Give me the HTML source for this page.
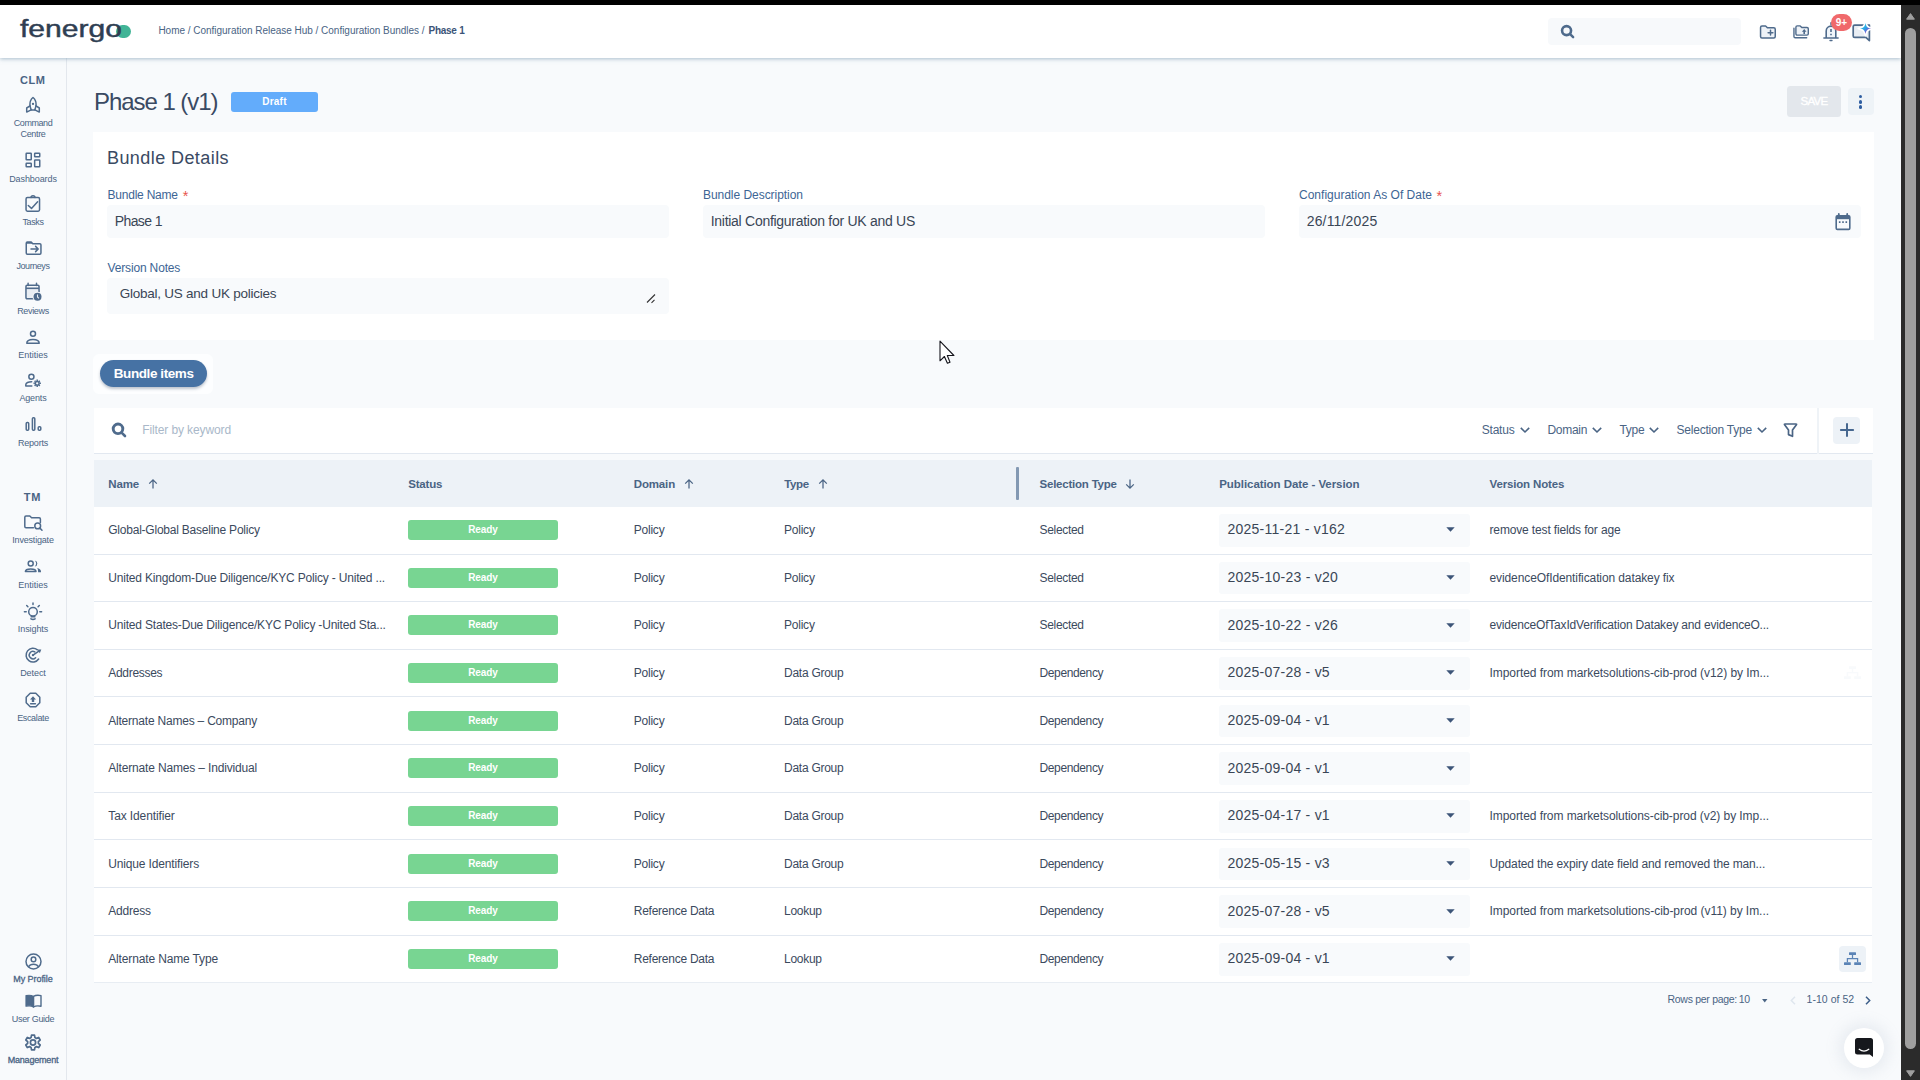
<!DOCTYPE html>
<html lang="en">
<head>
<meta charset="utf-8">
<title>Phase 1 - Configuration Bundles</title>
<style>
*{box-sizing:border-box;margin:0;padding:0}
html,body{width:1920px;height:1080px;overflow:hidden}
body{font-family:"Liberation Sans",sans-serif;background:#f8fafc;color:#33475b;position:relative}
.abs{position:absolute}
#topbar{position:absolute;left:0;top:0;width:1920px;height:5px;background:#000;z-index:30}
#header{position:absolute;left:0;top:0;width:1901px;height:58px;background:#fff;box-shadow:0 1px 4px rgba(105,140,165,.55);z-index:20}
#sidebar{position:absolute;left:0;top:0;width:67px;height:1080px;background:#f8fafc;border-right:1px solid #e3e7ed;z-index:10}
#scroll{position:absolute;left:1901px;top:5px;width:19px;height:1075px;background:#2b2b2b;z-index:25}
#scroll .thumb{position:absolute;left:4px;top:22.800px;width:11px;height:1021.200px;border-radius:5.500px;background:#9f9f9f}
.t{position:absolute;white-space:pre}
svg{overflow:visible}
</style>
</head>
<body>
<div id="main">
<span class="t" style="left:94.00px;top:89.68px;font-size:24px;line-height:24px;color:#3a4a63;letter-spacing:-1.048px;">Phase 1 (v1)</span>
<div class="abs" style="left:231px;top:92px;width:87px;height:20px;background:#63acfb;border-radius:3px"></div>
<span class="t" style="left:262.25px;top:96.53px;font-size:10px;line-height:10px;color:#fff;font-weight:700;letter-spacing:0.231px;">Draft</span>
<div class="abs" style="left:1787px;top:86px;width:54px;height:31px;background:#e3e7ec;border-radius:3.500px"></div>
<span class="t" style="left:1800.60px;top:96.07px;font-size:11.5px;line-height:11.5px;color:#fff;letter-spacing:-0.757px;-webkit-text-stroke:0.35px #fff;">SAVE</span>
<div class="abs" style="left:1848.2px;top:88px;width:25.8px;height:26.6px;background:#eef3f7;border-radius:4px"></div>
<div class="abs" style="left:1859.35px;top:95.35000000000001px;width:3.1px;height:3.1px;background:#2d5da0;border-radius:50%"></div>
<div class="abs" style="left:1859.35px;top:100.45px;width:3.1px;height:3.1px;background:#2d5da0;border-radius:50%"></div>
<div class="abs" style="left:1859.35px;top:105.45px;width:3.1px;height:3.1px;background:#2d5da0;border-radius:50%"></div>
<div class="abs" style="left:93px;top:132px;width:1781px;height:207.7px;background:#fff;"></div>
<span class="t" style="left:107.00px;top:148.76px;font-size:18px;line-height:18px;color:#3a4a63;letter-spacing:0.423px;">Bundle Details</span>
<span class="t" style="left:107.50px;top:188.84px;font-size:12px;line-height:12px;color:#3d6594;letter-spacing:-0.220px;">Bundle Name</span>
<span class="t" style="left:182.70px;top:188.53px;font-size:14.5px;line-height:14.5px;color:#e8554e;">*</span>
<div class="abs" style="left:107px;top:205px;width:562px;height:33px;background:#f8fafc;border-radius:4px"></div>
<span class="t" style="left:114.70px;top:214.15px;font-size:14px;line-height:14px;color:#3a4656;letter-spacing:-0.582px;">Phase 1</span>
<span class="t" style="left:703.00px;top:188.84px;font-size:12px;line-height:12px;color:#3d6594;letter-spacing:-0.041px;">Bundle Description</span>
<div class="abs" style="left:703px;top:205px;width:562px;height:33px;background:#f8fafc;border-radius:4px"></div>
<span class="t" style="left:710.70px;top:214.15px;font-size:14px;line-height:14px;color:#3a4656;letter-spacing:-0.277px;">Initial Configuration for UK and US</span>
<span class="t" style="left:1299.00px;top:188.84px;font-size:12px;line-height:12px;color:#3d6594;letter-spacing:0.010px;">Configuration As Of Date</span>
<span class="t" style="left:1436.40px;top:188.53px;font-size:14.5px;line-height:14.5px;color:#e8554e;">*</span>
<div class="abs" style="left:1298.5px;top:205px;width:562.5px;height:33px;background:#f8fafc;border-radius:4px"></div>
<span class="t" style="left:1306.70px;top:214.15px;font-size:14px;line-height:14px;color:#3a4656;letter-spacing:0.167px;">26/11/2025</span>
<svg class="abs" style="left:1835px;top:213px;" width="16" height="18" viewBox="0 0 16 18"><path d="M2.400 2.800H13.600Q14.800 2.800 14.800 4V15.200Q14.800 16.400 13.600 16.400H2.400Q1.200 16.400 1.200 15.200V4Q1.200 2.800 2.400 2.800z" fill="none" stroke="#4f6b8c" stroke-width="1.600"/><path d="M1.200 2.800H14.800V6.200H1.200z" fill="#4f6b8c"/><path d="M3.800 .9V3M12.200 .9V3" stroke="#4f6b8c" stroke-width="1.800" stroke-linecap="round"/><path d="M3.900 9.100H5.500M7.200 9.100H8.800M10.500 9.100H12.100" stroke="#4f6b8c" stroke-width="1.700"/></svg>
<span class="t" style="left:107.50px;top:261.64px;font-size:12px;line-height:12px;color:#3d6594;letter-spacing:-0.155px;">Version Notes</span>
<div class="abs" style="left:107px;top:278.3px;width:562px;height:35.5px;background:#f8fafc;border-radius:4px"></div>
<span class="t" style="left:119.70px;top:287.37px;font-size:13.5px;line-height:13.5px;color:#3a4656;letter-spacing:-0.240px;">Global, US and UK policies</span>
<svg class="abs" style="left:646px;top:293px;" width="10" height="11" viewBox="0 0 10 11"><path d="M1 9.500L9 1.500M5.500 9.800L8.500 6.800" stroke="#333" stroke-width="1.100" fill="none"/></svg>
<div class="abs" style="left:93px;top:354px;width:120px;height:39.5px;background:#fdfeff;border-radius:6px"></div>
<div class="abs" style="left:100px;top:360px;width:107px;height:26.7px;background:#4672a4;border-radius:13.500px;box-shadow:0 2px 3px rgba(40,60,90,.3)"></div>
<span class="t" style="left:113.75px;top:366.67px;font-size:13.5px;line-height:13.5px;color:#fff;font-weight:700;letter-spacing:-0.418px;">Bundle items</span>
<div class="abs" style="left:93.5px;top:408px;width:1723px;height:46px;background:#fff;border-bottom:1px solid #e2e8f0"></div>
<div class="abs" style="left:1816.5px;top:408px;width:2.5px;height:46px;background:#eff3f7;"></div>
<div class="abs" style="left:1819px;top:408px;width:54.3px;height:46px;background:#fff;border-bottom:1px solid #e2e8f0"></div>
<svg class="abs" style="left:111px;top:421.8px;" width="16" height="16" viewBox="0 0 16 16"><circle cx="7" cy="6.800" r="4.800" fill="none" stroke="#4f6b8c" stroke-width="2.900"/><path d="M10.800 10.800L14 14" stroke="#4f6b8c" stroke-width="2.600" stroke-linecap="round"/></svg>
<span class="t" style="left:142.25px;top:423.59px;font-size:12px;line-height:12px;color:#a9b8c9;letter-spacing:-0.115px;">Filter by keyword</span>
<span class="t" style="left:1481.75px;top:423.59px;font-size:12px;line-height:12px;color:#4a6484;letter-spacing:-0.214px;">Status</span>
<svg class="abs" style="left:1519.5px;top:427.3px;" width="10" height="6" viewBox="0 0 10 6"><path d="M.8.900L5 5 9.200.9" fill="none" stroke="#4a6484" stroke-width="1.600"/></svg>
<span class="t" style="left:1547.50px;top:423.59px;font-size:12px;line-height:12px;color:#4a6484;letter-spacing:-0.310px;">Domain</span>
<svg class="abs" style="left:1592px;top:427.3px;" width="10" height="6" viewBox="0 0 10 6"><path d="M.8.900L5 5 9.200.9" fill="none" stroke="#4a6484" stroke-width="1.600"/></svg>
<span class="t" style="left:1619.50px;top:423.59px;font-size:12px;line-height:12px;color:#4a6484;letter-spacing:-0.316px;">Type</span>
<svg class="abs" style="left:1649px;top:427.3px;" width="10" height="6" viewBox="0 0 10 6"><path d="M.8.900L5 5 9.200.9" fill="none" stroke="#4a6484" stroke-width="1.600"/></svg>
<span class="t" style="left:1676.50px;top:423.59px;font-size:12px;line-height:12px;color:#4a6484;letter-spacing:-0.214px;">Selection Type</span>
<svg class="abs" style="left:1756.5px;top:427.3px;" width="10" height="6" viewBox="0 0 10 6"><path d="M.8.900L5 5 9.200.9" fill="none" stroke="#4a6484" stroke-width="1.600"/></svg>
<svg class="abs" style="left:1783px;top:423px;" width="15" height="14" viewBox="0 0 15 14"><path d="M1.600 1.700Q1.100 1 2 1H13Q13.900 1 13.400 1.700L9.500 6.900V13.300L5.500 11.600V6.900z" fill="none" stroke="#4a6484" stroke-width="1.700" stroke-linejoin="round"/></svg>
<div class="abs" style="left:1833px;top:417px;width:27px;height:27px;background:#edf2f7;border-radius:4px"></div>
<svg class="abs" style="left:1839.6px;top:423.1px;" width="14" height="14" viewBox="0 0 14 14"><path d="M7 .9v12.200M.9 7h12.200" stroke="#46678f" stroke-width="2" stroke-linecap="round"/></svg>
<div class="abs" style="left:93.5px;top:460px;width:1778.5px;height:47px;background:#edf2f7;"></div>
<span class="t" style="left:108.25px;top:478.52px;font-size:11.5px;line-height:11.5px;color:#4a6484;font-weight:700;letter-spacing:-0.145px;">Name</span>
<svg class="abs" style="left:147.75px;top:479px;" width="10" height="10" viewBox="0 0 10 10"><path d="M5 9.600V.8M1.200 4.600L5 .8l3.800 3.800" fill="none" stroke="#4a6484" stroke-width="1.250"/></svg>
<span class="t" style="left:408.25px;top:478.52px;font-size:11.5px;line-height:11.5px;color:#4a6484;font-weight:700;letter-spacing:-0.193px;">Status</span>
<span class="t" style="left:633.75px;top:478.52px;font-size:11.5px;line-height:11.5px;color:#4a6484;font-weight:700;letter-spacing:-0.154px;">Domain</span>
<svg class="abs" style="left:683.75px;top:479px;" width="10" height="10" viewBox="0 0 10 10"><path d="M5 9.600V.8M1.200 4.600L5 .8l3.800 3.800" fill="none" stroke="#4a6484" stroke-width="1.250"/></svg>
<span class="t" style="left:784.25px;top:478.52px;font-size:11.5px;line-height:11.5px;color:#4a6484;font-weight:700;letter-spacing:-0.375px;">Type</span>
<svg class="abs" style="left:817.5px;top:479px;" width="10" height="10" viewBox="0 0 10 10"><path d="M5 9.600V.8M1.200 4.600L5 .8l3.800 3.800" fill="none" stroke="#4a6484" stroke-width="1.250"/></svg>
<span class="t" style="left:1039.50px;top:478.52px;font-size:11.5px;line-height:11.5px;color:#4a6484;font-weight:700;letter-spacing:-0.219px;">Selection Type</span>
<svg class="abs" style="left:1125.0px;top:479.3px;" width="10" height="10" viewBox="0 0 10 10"><path d="M5 .4v8.800M1.200 5.400L5 9.200l3.800-3.800" fill="none" stroke="#4a6484" stroke-width="1.250"/></svg>
<span class="t" style="left:1219.25px;top:478.52px;font-size:11.5px;line-height:11.5px;color:#4a6484;font-weight:700;letter-spacing:-0.062px;">Publication Date - Version</span>
<span class="t" style="left:1489.50px;top:478.52px;font-size:11.5px;line-height:11.5px;color:#4a6484;font-weight:700;letter-spacing:-0.150px;">Version Notes</span>
<div class="abs" style="left:1016px;top:467px;width:3px;height:33px;background:#8399b3;border-radius:1px"></div>
<div class="abs" style="left:93.5px;top:507px;width:1778.5px;height:476px;background:#fff;"></div>
<div class="abs" style="left:93.5px;top:554px;width:1778.5px;height:1px;background:#e2e8f0;"></div>
<span class="t" style="left:108.25px;top:523.84px;font-size:12px;line-height:12px;color:#3b4a5e;letter-spacing:-0.227px;">Global-Global Baseline Policy</span>
<div class="abs" style="left:408px;top:520px;width:150px;height:20px;background:#78d592;border-radius:3px"></div>
<span class="t" style="left:468.25px;top:525.13px;font-size:10px;line-height:10px;color:#fff;font-weight:700;letter-spacing:-0.103px;">Ready</span>
<span class="t" style="left:633.75px;top:523.84px;font-size:12px;line-height:12px;color:#3b4a5e;letter-spacing:-0.224px;">Policy</span>
<span class="t" style="left:784.00px;top:523.84px;font-size:12px;line-height:12px;color:#3b4a5e;letter-spacing:-0.224px;">Policy</span>
<span class="t" style="left:1039.50px;top:523.84px;font-size:12px;line-height:12px;color:#3b4a5e;letter-spacing:-0.321px;">Selected</span>
<div class="abs" style="left:1218.75px;top:514.0px;width:251.25px;height:32.5px;background:#f8fafc;border-radius:3px"></div>
<span class="t" style="left:1227.50px;top:522.45px;font-size:14px;line-height:14px;color:#3a4656;letter-spacing:0.243px;">2025-11-21 - v162</span>
<svg class="abs" style="left:1445.7px;top:527.4px;" width="9" height="5" viewBox="0 0 9 5"><path d="M.3.200h8.400L4.500 4.700z" fill="#3d5578"/></svg>
<span class="t" style="left:1489.50px;top:523.84px;font-size:12px;line-height:12px;color:#3b4a5e;letter-spacing:-0.144px;">remove test fields for age</span>
<div class="abs" style="left:93.5px;top:601px;width:1778.5px;height:1px;background:#e2e8f0;"></div>
<span class="t" style="left:108.25px;top:571.51px;font-size:12px;line-height:12px;color:#3b4a5e;letter-spacing:-0.181px;">United Kingdom-Due Diligence/KYC Policy - United ...</span>
<div class="abs" style="left:408px;top:568px;width:150px;height:20px;background:#78d592;border-radius:3px"></div>
<span class="t" style="left:468.25px;top:573.13px;font-size:10px;line-height:10px;color:#fff;font-weight:700;letter-spacing:-0.103px;">Ready</span>
<span class="t" style="left:633.75px;top:571.51px;font-size:12px;line-height:12px;color:#3b4a5e;letter-spacing:-0.224px;">Policy</span>
<span class="t" style="left:784.00px;top:571.51px;font-size:12px;line-height:12px;color:#3b4a5e;letter-spacing:-0.224px;">Policy</span>
<span class="t" style="left:1039.50px;top:571.51px;font-size:12px;line-height:12px;color:#3b4a5e;letter-spacing:-0.321px;">Selected</span>
<div class="abs" style="left:1218.75px;top:561.5px;width:251.25px;height:32.5px;background:#f8fafc;border-radius:3px"></div>
<span class="t" style="left:1227.50px;top:570.12px;font-size:14px;line-height:14px;color:#3a4656;letter-spacing:0.240px;">2025-10-23 - v20</span>
<svg class="abs" style="left:1445.7px;top:575.067px;" width="9" height="5" viewBox="0 0 9 5"><path d="M.3.200h8.400L4.500 4.700z" fill="#3d5578"/></svg>
<span class="t" style="left:1489.50px;top:571.51px;font-size:12px;line-height:12px;color:#3b4a5e;letter-spacing:-0.105px;">evidenceOfIdentification datakey fix</span>
<div class="abs" style="left:93.5px;top:649px;width:1778.5px;height:1px;background:#e2e8f0;"></div>
<span class="t" style="left:108.25px;top:619.18px;font-size:12px;line-height:12px;color:#3b4a5e;letter-spacing:-0.188px;">United States-Due Diligence/KYC Policy -United Sta...</span>
<div class="abs" style="left:408px;top:615px;width:150px;height:20px;background:#78d592;border-radius:3px"></div>
<span class="t" style="left:468.25px;top:620.13px;font-size:10px;line-height:10px;color:#fff;font-weight:700;letter-spacing:-0.103px;">Ready</span>
<span class="t" style="left:633.75px;top:619.18px;font-size:12px;line-height:12px;color:#3b4a5e;letter-spacing:-0.224px;">Policy</span>
<span class="t" style="left:784.00px;top:619.18px;font-size:12px;line-height:12px;color:#3b4a5e;letter-spacing:-0.224px;">Policy</span>
<span class="t" style="left:1039.50px;top:619.18px;font-size:12px;line-height:12px;color:#3b4a5e;letter-spacing:-0.321px;">Selected</span>
<div class="abs" style="left:1218.75px;top:609.0px;width:251.25px;height:32.5px;background:#f8fafc;border-radius:3px"></div>
<span class="t" style="left:1227.50px;top:617.78px;font-size:14px;line-height:14px;color:#3a4656;letter-spacing:0.240px;">2025-10-22 - v26</span>
<svg class="abs" style="left:1445.7px;top:622.734px;" width="9" height="5" viewBox="0 0 9 5"><path d="M.3.200h8.400L4.500 4.700z" fill="#3d5578"/></svg>
<span class="t" style="left:1489.50px;top:619.18px;font-size:12px;line-height:12px;color:#3b4a5e;letter-spacing:-0.192px;">evidenceOfTaxIdVerification Datakey and evidenceO...</span>
<div class="abs" style="left:93.5px;top:696px;width:1778.5px;height:1px;background:#e2e8f0;"></div>
<span class="t" style="left:108.25px;top:666.84px;font-size:12px;line-height:12px;color:#3b4a5e;letter-spacing:-0.300px;">Addresses</span>
<div class="abs" style="left:408px;top:663px;width:150px;height:20px;background:#78d592;border-radius:3px"></div>
<span class="t" style="left:468.25px;top:668.13px;font-size:10px;line-height:10px;color:#fff;font-weight:700;letter-spacing:-0.103px;">Ready</span>
<span class="t" style="left:633.75px;top:666.84px;font-size:12px;line-height:12px;color:#3b4a5e;letter-spacing:-0.224px;">Policy</span>
<span class="t" style="left:784.00px;top:666.84px;font-size:12px;line-height:12px;color:#3b4a5e;letter-spacing:-0.261px;">Data Group</span>
<span class="t" style="left:1039.50px;top:666.84px;font-size:12px;line-height:12px;color:#3b4a5e;letter-spacing:-0.371px;">Dependency</span>
<div class="abs" style="left:1218.75px;top:657.0px;width:251.25px;height:32.5px;background:#f8fafc;border-radius:3px"></div>
<span class="t" style="left:1227.50px;top:665.45px;font-size:14px;line-height:14px;color:#3a4656;letter-spacing:0.237px;">2025-07-28 - v5</span>
<svg class="abs" style="left:1445.7px;top:670.401px;" width="9" height="5" viewBox="0 0 9 5"><path d="M.3.200h8.400L4.500 4.700z" fill="#3d5578"/></svg>
<span class="t" style="left:1489.50px;top:666.84px;font-size:12px;line-height:12px;color:#3b4a5e;letter-spacing:-0.056px;">Imported from marketsolutions-cib-prod (v12) by Im...</span>
<div class="abs" style="left:93.5px;top:744px;width:1778.5px;height:1px;background:#e2e8f0;"></div>
<span class="t" style="left:108.25px;top:714.51px;font-size:12px;line-height:12px;color:#3b4a5e;letter-spacing:-0.213px;">Alternate Names – Company</span>
<div class="abs" style="left:408px;top:711px;width:150px;height:20px;background:#78d592;border-radius:3px"></div>
<span class="t" style="left:468.25px;top:716.13px;font-size:10px;line-height:10px;color:#fff;font-weight:700;letter-spacing:-0.103px;">Ready</span>
<span class="t" style="left:633.75px;top:714.51px;font-size:12px;line-height:12px;color:#3b4a5e;letter-spacing:-0.224px;">Policy</span>
<span class="t" style="left:784.00px;top:714.51px;font-size:12px;line-height:12px;color:#3b4a5e;letter-spacing:-0.261px;">Data Group</span>
<span class="t" style="left:1039.50px;top:714.51px;font-size:12px;line-height:12px;color:#3b4a5e;letter-spacing:-0.371px;">Dependency</span>
<div class="abs" style="left:1218.75px;top:704.5px;width:251.25px;height:32.5px;background:#f8fafc;border-radius:3px"></div>
<span class="t" style="left:1227.50px;top:713.12px;font-size:14px;line-height:14px;color:#3a4656;letter-spacing:0.237px;">2025-09-04 - v1</span>
<svg class="abs" style="left:1445.7px;top:718.068px;" width="9" height="5" viewBox="0 0 9 5"><path d="M.3.200h8.400L4.500 4.700z" fill="#3d5578"/></svg>
<div class="abs" style="left:93.5px;top:792px;width:1778.5px;height:1px;background:#e2e8f0;"></div>
<span class="t" style="left:108.25px;top:762.18px;font-size:12px;line-height:12px;color:#3b4a5e;letter-spacing:-0.167px;">Alternate Names – Individual</span>
<div class="abs" style="left:408px;top:758px;width:150px;height:20px;background:#78d592;border-radius:3px"></div>
<span class="t" style="left:468.25px;top:763.13px;font-size:10px;line-height:10px;color:#fff;font-weight:700;letter-spacing:-0.103px;">Ready</span>
<span class="t" style="left:633.75px;top:762.18px;font-size:12px;line-height:12px;color:#3b4a5e;letter-spacing:-0.224px;">Policy</span>
<span class="t" style="left:784.00px;top:762.18px;font-size:12px;line-height:12px;color:#3b4a5e;letter-spacing:-0.261px;">Data Group</span>
<span class="t" style="left:1039.50px;top:762.18px;font-size:12px;line-height:12px;color:#3b4a5e;letter-spacing:-0.371px;">Dependency</span>
<div class="abs" style="left:1218.75px;top:752.0px;width:251.25px;height:32.5px;background:#f8fafc;border-radius:3px"></div>
<span class="t" style="left:1227.50px;top:760.78px;font-size:14px;line-height:14px;color:#3a4656;letter-spacing:0.237px;">2025-09-04 - v1</span>
<svg class="abs" style="left:1445.7px;top:765.735px;" width="9" height="5" viewBox="0 0 9 5"><path d="M.3.200h8.400L4.500 4.700z" fill="#3d5578"/></svg>
<div class="abs" style="left:93.5px;top:839px;width:1778.5px;height:1px;background:#e2e8f0;"></div>
<span class="t" style="left:108.25px;top:809.84px;font-size:12px;line-height:12px;color:#3b4a5e;letter-spacing:-0.110px;">Tax Identifier</span>
<div class="abs" style="left:408px;top:806px;width:150px;height:20px;background:#78d592;border-radius:3px"></div>
<span class="t" style="left:468.25px;top:811.13px;font-size:10px;line-height:10px;color:#fff;font-weight:700;letter-spacing:-0.103px;">Ready</span>
<span class="t" style="left:633.75px;top:809.84px;font-size:12px;line-height:12px;color:#3b4a5e;letter-spacing:-0.224px;">Policy</span>
<span class="t" style="left:784.00px;top:809.84px;font-size:12px;line-height:12px;color:#3b4a5e;letter-spacing:-0.261px;">Data Group</span>
<span class="t" style="left:1039.50px;top:809.84px;font-size:12px;line-height:12px;color:#3b4a5e;letter-spacing:-0.371px;">Dependency</span>
<div class="abs" style="left:1218.75px;top:800.0px;width:251.25px;height:32.5px;background:#f8fafc;border-radius:3px"></div>
<span class="t" style="left:1227.50px;top:808.45px;font-size:14px;line-height:14px;color:#3a4656;letter-spacing:0.237px;">2025-04-17 - v1</span>
<svg class="abs" style="left:1445.7px;top:813.4019999999999px;" width="9" height="5" viewBox="0 0 9 5"><path d="M.3.200h8.400L4.500 4.700z" fill="#3d5578"/></svg>
<span class="t" style="left:1489.50px;top:809.84px;font-size:12px;line-height:12px;color:#3b4a5e;letter-spacing:-0.062px;">Imported from marketsolutions-cib-prod (v2) by Imp...</span>
<div class="abs" style="left:93.5px;top:887px;width:1778.5px;height:1px;background:#e2e8f0;"></div>
<span class="t" style="left:108.25px;top:857.51px;font-size:12px;line-height:12px;color:#3b4a5e;letter-spacing:-0.147px;">Unique Identifiers</span>
<div class="abs" style="left:408px;top:854px;width:150px;height:20px;background:#78d592;border-radius:3px"></div>
<span class="t" style="left:468.25px;top:859.13px;font-size:10px;line-height:10px;color:#fff;font-weight:700;letter-spacing:-0.103px;">Ready</span>
<span class="t" style="left:633.75px;top:857.51px;font-size:12px;line-height:12px;color:#3b4a5e;letter-spacing:-0.224px;">Policy</span>
<span class="t" style="left:784.00px;top:857.51px;font-size:12px;line-height:12px;color:#3b4a5e;letter-spacing:-0.261px;">Data Group</span>
<span class="t" style="left:1039.50px;top:857.51px;font-size:12px;line-height:12px;color:#3b4a5e;letter-spacing:-0.371px;">Dependency</span>
<div class="abs" style="left:1218.75px;top:847.5px;width:251.25px;height:32.5px;background:#f8fafc;border-radius:3px"></div>
<span class="t" style="left:1227.50px;top:856.12px;font-size:14px;line-height:14px;color:#3a4656;letter-spacing:0.237px;">2025-05-15 - v3</span>
<svg class="abs" style="left:1445.7px;top:861.069px;" width="9" height="5" viewBox="0 0 9 5"><path d="M.3.200h8.400L4.500 4.700z" fill="#3d5578"/></svg>
<span class="t" style="left:1489.50px;top:857.51px;font-size:12px;line-height:12px;color:#3b4a5e;letter-spacing:-0.137px;">Updated the expiry date field and removed the man...</span>
<div class="abs" style="left:93.5px;top:935px;width:1778.5px;height:1px;background:#e2e8f0;"></div>
<span class="t" style="left:108.25px;top:905.18px;font-size:12px;line-height:12px;color:#3b4a5e;letter-spacing:-0.204px;">Address</span>
<div class="abs" style="left:408px;top:901px;width:150px;height:20px;background:#78d592;border-radius:3px"></div>
<span class="t" style="left:468.25px;top:906.13px;font-size:10px;line-height:10px;color:#fff;font-weight:700;letter-spacing:-0.103px;">Ready</span>
<span class="t" style="left:633.75px;top:905.18px;font-size:12px;line-height:12px;color:#3b4a5e;letter-spacing:-0.252px;">Reference Data</span>
<span class="t" style="left:784.00px;top:905.18px;font-size:12px;line-height:12px;color:#3b4a5e;letter-spacing:-0.276px;">Lookup</span>
<span class="t" style="left:1039.50px;top:905.18px;font-size:12px;line-height:12px;color:#3b4a5e;letter-spacing:-0.371px;">Dependency</span>
<div class="abs" style="left:1218.75px;top:895.0px;width:251.25px;height:32.5px;background:#f8fafc;border-radius:3px"></div>
<span class="t" style="left:1227.50px;top:903.78px;font-size:14px;line-height:14px;color:#3a4656;letter-spacing:0.237px;">2025-07-28 - v5</span>
<svg class="abs" style="left:1445.7px;top:908.736px;" width="9" height="5" viewBox="0 0 9 5"><path d="M.3.200h8.400L4.500 4.700z" fill="#3d5578"/></svg>
<span class="t" style="left:1489.50px;top:905.18px;font-size:12px;line-height:12px;color:#3b4a5e;letter-spacing:-0.045px;">Imported from marketsolutions-cib-prod (v11) by Im...</span>
<div class="abs" style="left:93.5px;top:982px;width:1778.5px;height:1px;background:#e8edf3;"></div>
<span class="t" style="left:108.25px;top:952.85px;font-size:12px;line-height:12px;color:#3b4a5e;letter-spacing:-0.148px;">Alternate Name Type</span>
<div class="abs" style="left:408px;top:949px;width:150px;height:20px;background:#78d592;border-radius:3px"></div>
<span class="t" style="left:468.25px;top:954.13px;font-size:10px;line-height:10px;color:#fff;font-weight:700;letter-spacing:-0.103px;">Ready</span>
<span class="t" style="left:633.75px;top:952.85px;font-size:12px;line-height:12px;color:#3b4a5e;letter-spacing:-0.252px;">Reference Data</span>
<span class="t" style="left:784.00px;top:952.85px;font-size:12px;line-height:12px;color:#3b4a5e;letter-spacing:-0.276px;">Lookup</span>
<span class="t" style="left:1039.50px;top:952.85px;font-size:12px;line-height:12px;color:#3b4a5e;letter-spacing:-0.371px;">Dependency</span>
<div class="abs" style="left:1218.75px;top:943.0px;width:251.25px;height:32.5px;background:#f8fafc;border-radius:3px"></div>
<span class="t" style="left:1227.50px;top:951.45px;font-size:14px;line-height:14px;color:#3a4656;letter-spacing:0.237px;">2025-09-04 - v1</span>
<svg class="abs" style="left:1445.7px;top:956.403px;" width="9" height="5" viewBox="0 0 9 5"><path d="M.3.200h8.400L4.500 4.700z" fill="#3d5578"/></svg>
<svg class="abs" style="left:1844px;top:666px;" width="17" height="14" viewBox="0 0 17 14"><g opacity="0.035"><rect x="5" y=".3" width="7" height="2.800" rx=".5" fill="#5b84b6"/><rect x="0" y="10.300" width="6.800" height="2.800" rx=".5" fill="#5b84b6"/><rect x="10.200" y="10.300" width="6.800" height="2.800" rx=".5" fill="#5b84b6"/><path d="M8.500 3v3.600M3.400 10.300V6.600h10.200v3.700" fill="none" stroke="#5b84b6" stroke-width="1.250"/></g></svg>
<div class="abs" style="left:1839px;top:946px;width:27px;height:26px;background:#edf2f7;border-radius:4px"></div>
<svg class="abs" style="left:1844px;top:952px;" width="17" height="14" viewBox="0 0 17 14"><g opacity="1"><rect x="5" y=".3" width="7" height="2.800" rx=".5" fill="#5b84b6"/><rect x="0" y="10.300" width="6.800" height="2.800" rx=".5" fill="#5b84b6"/><rect x="10.200" y="10.300" width="6.800" height="2.800" rx=".5" fill="#5b84b6"/><path d="M8.500 3v3.600M3.400 10.300V6.600h10.200v3.700" fill="none" stroke="#5b84b6" stroke-width="1.250"/></g></svg>
<span class="t" style="left:1667.50px;top:994.41px;font-size:10.5px;line-height:10.5px;color:#4a6484;letter-spacing:-0.289px;">Rows per page:</span>
<span class="t" style="left:1738.75px;top:994.41px;font-size:10.5px;line-height:10.5px;color:#4a6484;letter-spacing:-0.219px;">10</span>
<svg class="abs" style="left:1762px;top:999.3px;" width="5.5" height="3.6" viewBox="0 0 6 4"><path d="M0 0h6L3 4z" fill="#4a6484"/></svg>
<svg class="abs" style="left:1789.8px;top:996.1px;" width="6" height="9" viewBox="0 0 6 9"><path d="M5 .8L1.300 4.500 5 8.200" fill="none" stroke="#dfe6ee" stroke-width="1.500"/></svg>
<span class="t" style="left:1806.50px;top:994.41px;font-size:10.5px;line-height:10.5px;color:#4a6484;letter-spacing:0.045px;">1-10 of 52</span>
<svg class="abs" style="left:1864.8px;top:996.1px;" width="6" height="9" viewBox="0 0 6 9"><path d="M1 .8l3.700 3.700L1 8.200" fill="none" stroke="#3d5f8a" stroke-width="1.500"/></svg>
<svg class="abs" style="left:938.7px;top:340.3px;" width="16" height="25" viewBox="0 0 16 25"><path d="M1 1.200V20.800L5.400 16.500 8.400 23.300 11 22.200 8.300 15.500H14.900z" fill="#fff" stroke="#15151c" stroke-width="1.100" stroke-linejoin="round"/></svg>
<div class="abs" style="left:1844px;top:1028px;width:40px;height:40px;background:#fff;border-radius:50%;box-shadow:0 0 14px 6px rgba(140,155,175,.13)"></div>
<svg class="abs" style="left:1855px;top:1038px;" width="18" height="19" viewBox="0 0 18 19"><path d="M2.500 0h13a2.500 2.500 0 0 1 2.500 2.500V19l-3.200-2.600H2.500A2.500 2.500 0 0 1 0 13.900V2.500A2.500 2.500 0 0 1 2.500 0z" fill="#16181d"/><path d="M4.200 11.300c3 2.200 6.600 2.200 9.600 0" fill="none" stroke="#fff" stroke-width="1.300" stroke-linecap="round"/></svg>
</div>
<div id="sidebar">
<span class="t" style="left:20.05px;top:74.89px;font-size:11px;line-height:11px;color:#4a6484;font-weight:700;letter-spacing:0.557px;">CLM</span>
<svg class="abs" style="left:25px;top:96px;" width="16" height="18" viewBox="0 0 16 18"><path d="M8 1.500C5.900 3.300 4.800 6 4.900 8.600 5 10.600 5.600 12.400 6.200 13.900H9.800C10.400 12.400 11 10.600 11.100 8.600 11.200 6 10.100 3.300 8 1.500z" fill="none" stroke="#4f6b8c" stroke-width="1.5" stroke-linejoin="round" stroke-linecap="round"/><path d="M4.950 9.900L1.700 12V16.100L6.100 13.900M11.050 9.900L14.300 12V16.100L9.900 13.900" fill="none" stroke="#4f6b8c" stroke-width="1.5" stroke-linejoin="round" stroke-linecap="round"/><circle cx="8" cy="7.900" r="1.150" fill="#4f6b8c"/></svg>
<span class="t" style="left:13.75px;top:118.68px;font-size:9px;line-height:9px;color:#4a6484;letter-spacing:-0.431px;">Command</span>
<span class="t" style="left:20.50px;top:129.68px;font-size:9px;line-height:9px;color:#4a6484;letter-spacing:-0.336px;">Centre</span>
<svg class="abs" style="left:25px;top:152px;" width="16" height="16" viewBox="0 0 16 16"><rect x="1.150" y="1.150" width="5.100" height="6.700" rx=".5" fill="none" stroke="#4f6b8c" stroke-width="1.5" stroke-linejoin="round" stroke-linecap="round"/><rect x="9.650" y="1.150" width="5.100" height="3.500" rx=".5" fill="none" stroke="#4f6b8c" stroke-width="1.5" stroke-linejoin="round" stroke-linecap="round"/><rect x="1.150" y="11.250" width="5.100" height="3.600" rx=".5" fill="none" stroke="#4f6b8c" stroke-width="1.5" stroke-linejoin="round" stroke-linecap="round"/><rect x="9.650" y="7.950" width="5.100" height="6.900" rx=".5" fill="none" stroke="#4f6b8c" stroke-width="1.5" stroke-linejoin="round" stroke-linecap="round"/></svg>
<span class="t" style="left:9.20px;top:174.68px;font-size:9px;line-height:9px;color:#4a6484;letter-spacing:-0.093px;">Dashboards</span>
<svg class="abs" style="left:25px;top:195px;" width="16" height="18" viewBox="0 0 16 18"><rect x="1.050" y="2.550" width="13.500" height="13.700" rx="1.400" fill="none" stroke="#4f6b8c" stroke-width="1.5" stroke-linejoin="round" stroke-linecap="round"/><path d="M6 2.500A2 1.800 0 0 1 10 2.500" fill="none" stroke="#4f6b8c" stroke-width="1.5" stroke-linejoin="round" stroke-linecap="round"/><path d="M3.300 10.500L6.500 13.400 12.600 6.800" fill="none" stroke="#4f6b8c" stroke-width="1.5" stroke-linejoin="round" stroke-linecap="round"/></svg>
<span class="t" style="left:22.50px;top:217.68px;font-size:9px;line-height:9px;color:#4a6484;letter-spacing:-0.403px;">Tasks</span>
<svg class="abs" style="left:24.5px;top:240px;" width="17" height="16" viewBox="0 0 17 16"><path d="M2.400 2.050H6.200L7.800 3.700H14.800Q15.950 3.700 15.950 4.850V13.100Q15.950 14.250 14.800 14.250H2.400Q1.250 14.250 1.250 13.100V3.200Q1.250 2.050 2.400 2.050z" fill="none" stroke="#4f6b8c" stroke-width="1.5" stroke-linejoin="round" stroke-linecap="round"/><path d="M1.250 2.600Q1.250 2.050 2.400 2.050H6.200L7.800 3.700H1.250z" fill="#4f6b8c"/><path d="M6 9H12.800M10.600 6.400L13.200 9 10.600 11.600" fill="none" stroke="#4f6b8c" stroke-width="1.5" stroke-linejoin="round" stroke-linecap="round"/></svg>
<span class="t" style="left:16.50px;top:261.68px;font-size:9px;line-height:9px;color:#4a6484;letter-spacing:-0.441px;">Journeys</span>
<svg class="abs" style="left:23.9px;top:282px;" width="18" height="20" viewBox="0 0 18 20"><path d="M2 6.400H15V16.600H2z" fill="#e9eef4"/><path d="M9.600 16.650H3.100Q1.950 16.650 1.950 15.500V4.400Q1.950 3.250 3.100 3.250H13.900Q15.050 3.250 15.050 4.400V10.400" fill="none" stroke="#4f6b8c" stroke-width="1.5" stroke-linejoin="round" stroke-linecap="round"/><path d="M2 6.300H15" stroke="#4f6b8c" stroke-width="1.600" fill="none"/><path d="M4.100 1.200V3.400M12.500 1.200V3.400" fill="none" stroke="#4f6b8c" stroke-width="1.5" stroke-linejoin="round" stroke-linecap="round"/><circle cx="13.500" cy="14.800" r="5" fill="#f8fafc"/><circle cx="13.500" cy="14.800" r="4" fill="#4f6b8c"/><path d="M13.500 12.600V14.900L14.900 16.300" fill="none" stroke="#e9eef4" stroke-width="1.100"/></svg>
<span class="t" style="left:17.15px;top:307.38px;font-size:9px;line-height:9px;color:#4a6484;letter-spacing:-0.331px;">Reviews</span>
<svg class="abs" style="left:25px;top:329px;" width="16" height="16" viewBox="0 0 16 16"><circle cx="8" cy="4.700" r="2.500" fill="none" stroke="#4f6b8c" stroke-width="1.5" stroke-linejoin="round" stroke-linecap="round"/><path d="M1.800 14.200C1.800 11.600 4.600 10.400 8 10.400S14.200 11.600 14.200 14.200z" fill="none" stroke="#4f6b8c" stroke-width="1.5" stroke-linejoin="round" stroke-linecap="round"/></svg>
<span class="t" style="left:18.20px;top:350.68px;font-size:9px;line-height:9px;color:#4a6484;letter-spacing:0.011px;">Entities</span>
<svg class="abs" style="left:24px;top:372.5px;" width="18" height="16" viewBox="0 0 18 16"><circle cx="7.400" cy="3.800" r="2.550" fill="none" stroke="#4f6b8c" stroke-width="1.5" stroke-linejoin="round" stroke-linecap="round"/><path d="M7.700 8.700C4.400 8.700 1.800 9.900 1.800 11.800V12.900H7.800" fill="none" stroke="#4f6b8c" stroke-width="1.5" stroke-linejoin="round" stroke-linecap="round"/><circle cx="13.200" cy="10.300" r="1.900" fill="none" stroke="#4f6b8c" stroke-width="1.5" stroke-linejoin="round" stroke-linecap="round" stroke-width="1.400"/><path d="M13.200 6.600v1.300M13.200 12.700v1.300M9.500 10.300h1.300M15.600 10.300h1.300M10.600 7.700l.9.900M14.900 12l.9.900M15.800 7.700l-.9.900M11.500 12l-.9.900" stroke="#4f6b8c" stroke-width="1.500" fill="none"/></svg>
<span class="t" style="left:19.40px;top:393.68px;font-size:9px;line-height:9px;color:#4a6484;letter-spacing:-0.139px;">Agents</span>
<svg class="abs" style="left:24.5px;top:416px;" width="17" height="16" viewBox="0 0 17 16"><rect x="1.200" y="6.500" width="2.500" height="7.800" rx="1" fill="none" stroke="#4f6b8c" stroke-width="1.5" stroke-linejoin="round" stroke-linecap="round" stroke-width="1.400"/><rect x="7.400" y="1.700" width="2.400" height="12.600" rx="1" fill="none" stroke="#4f6b8c" stroke-width="1.5" stroke-linejoin="round" stroke-linecap="round" stroke-width="1.400"/><rect x="13.200" y="10.700" width="2.600" height="3.600" rx="1" fill="none" stroke="#4f6b8c" stroke-width="1.5" stroke-linejoin="round" stroke-linecap="round" stroke-width="1.400"/></svg>
<span class="t" style="left:17.90px;top:438.68px;font-size:9px;line-height:9px;color:#4a6484;letter-spacing:-0.188px;">Reports</span>
<span class="t" style="left:23.75px;top:491.69px;font-size:11px;line-height:11px;color:#4a6484;font-weight:700;letter-spacing:0.805px;">TM</span>
<svg class="abs" style="left:24px;top:515px;" width="19" height="17" viewBox="0 0 19 17"><path d="M9.400 12.700H2Q.8 12.700 .8 11.500V2.200Q.8 1 2 1H5.800L7.600 2.800H15.200Q16.400 2.800 16.400 4V7.400" fill="none" stroke="#4f6b8c" stroke-width="1.5" stroke-linejoin="round" stroke-linecap="round"/><circle cx="13.700" cy="10.900" r="2.900" fill="none" stroke="#4f6b8c" stroke-width="1.5" stroke-linejoin="round" stroke-linecap="round"/><path d="M15.900 13.100L18 15.200" fill="none" stroke="#4f6b8c" stroke-width="1.5" stroke-linejoin="round" stroke-linecap="round" stroke-width="1.800"/></svg>
<span class="t" style="left:12.25px;top:535.68px;font-size:9px;line-height:9px;color:#4a6484;letter-spacing:-0.185px;">Investigate</span>
<svg class="abs" style="left:24px;top:559.5px;" width="18" height="14" viewBox="0 0 18 14"><circle cx="6.700" cy="3.500" r="2.500" fill="none" stroke="#4f6b8c" stroke-width="1.5" stroke-linejoin="round" stroke-linecap="round"/><path d="M1.400 11.600C1.400 9.600 3.800 8.900 6.700 8.900S12 9.600 12 11.600z" fill="none" stroke="#4f6b8c" stroke-width="1.5" stroke-linejoin="round" stroke-linecap="round"/><path d="M10.800 .5A3.100 3.100 0 0 1 10.800 6.600 4.600 4.600 0 0 0 10.800 .5z" fill="#4f6b8c"/><path d="M13.200 8.100C15.400 8.600 17 9.700 17 11.400V12.300H14.100V11.400C14.100 10.100 13.800 9 13.200 8.100z" fill="#4f6b8c"/></svg>
<span class="t" style="left:18.20px;top:580.68px;font-size:9px;line-height:9px;color:#4a6484;letter-spacing:0.011px;">Entities</span>
<svg class="abs" style="left:24px;top:601.5px;" width="18" height="19" viewBox="0 0 18 19"><circle cx="9" cy="9.800" r="4.300" fill="none" stroke="#4f6b8c" stroke-width="1.5" stroke-linejoin="round" stroke-linecap="round"/><path d="M7.100 14.700H10.900" fill="none" stroke="#4f6b8c" stroke-width="1.5" stroke-linejoin="round" stroke-linecap="round"/><path d="M6.900 16.900Q9 18.100 11.100 16.900" fill="none" stroke="#4f6b8c" stroke-width="1.5" stroke-linejoin="round" stroke-linecap="round"/><path d="M9 1.100V2.500M.4 9.800H2.200M15.800 9.800H17.600M2.700 3.500L3.900 4.700M15.300 3.500L14.100 4.700" fill="none" stroke="#4f6b8c" stroke-width="1.5" stroke-linejoin="round" stroke-linecap="round" stroke-width="1.400"/></svg>
<span class="t" style="left:17.85px;top:624.68px;font-size:9px;line-height:9px;color:#4a6484;letter-spacing:-0.091px;">Insights</span>
<svg class="abs" style="left:24.5px;top:647px;" width="18" height="17" viewBox="0 0 18 17"><path d="M12.400 2.800A6.900 6.900 0 1 0 13.650 12.050" fill="none" stroke="#4f6b8c" stroke-width="1.5" stroke-linejoin="round" stroke-linecap="round" stroke-width="1.700"/><path d="M9.850 4.900A3.700 3.700 0 1 0 10.600 10.700" fill="none" stroke="#4f6b8c" stroke-width="1.5" stroke-linejoin="round" stroke-linecap="round" stroke-width="1.700"/><circle cx="8" cy="8.100" r="1.200" fill="#4f6b8c"/><path d="M8 8.100L14.600 3.700" fill="none" stroke="#4f6b8c" stroke-width="1.5" stroke-linejoin="round" stroke-linecap="round" stroke-width="1.300"/><path d="M12.400 2.500L16.300 2.600 14.800 6.200z" fill="#4f6b8c"/></svg>
<span class="t" style="left:20.20px;top:668.68px;font-size:9px;line-height:9px;color:#4a6484;letter-spacing:-0.069px;">Detect</span>
<svg class="abs" style="left:25px;top:691.5px;" width="16" height="16" viewBox="0 0 16 16"><path d="M5.200 1.200h5.600l4 4v5.600l-4 4H5.200l-4-4V5.200z" fill="none" stroke="#4f6b8c" stroke-width="1.5" stroke-linejoin="round" stroke-linecap="round"/><path d="M8 4.200l3 3.200H9.200V10H6.800V7.400H5z" fill="#4f6b8c"/><path d="M5.600 11.800h4.800" fill="none" stroke="#4f6b8c" stroke-width="1.5" stroke-linejoin="round" stroke-linecap="round" stroke-width="1.300"/></svg>
<span class="t" style="left:17.15px;top:713.68px;font-size:9px;line-height:9px;color:#4a6484;letter-spacing:-0.354px;">Escalate</span>
<svg class="abs" style="left:24.5px;top:952.5px;" width="17" height="17" viewBox="0 0 17 17"><circle cx="8.500" cy="8.500" r="7.500" fill="none" stroke="#4f6b8c" stroke-width="1.5" stroke-linejoin="round" stroke-linecap="round"/><circle cx="8.500" cy="6.400" r="2.300" fill="none" stroke="#4f6b8c" stroke-width="1.5" stroke-linejoin="round" stroke-linecap="round"/><path d="M3.600 13.600c1-1.600 2.800-2.400 4.900-2.400s3.900.8 4.900 2.400" fill="none" stroke="#4f6b8c" stroke-width="1.5" stroke-linejoin="round" stroke-linecap="round"/></svg>
<span class="t" style="left:13.30px;top:974.68px;font-size:9px;line-height:9px;color:#4a6484;letter-spacing:-0.062px;-webkit-text-stroke:0.3px #4a6484;">My Profile</span>
<svg class="abs" style="left:24.5px;top:994px;" width="17" height="14" viewBox="0 0 17 14"><path d="M8.500 2.400C6.600 1.200 3.800 1 1 1.600v10.600c2.800-.6 5.600-.4 7.500.8z" fill="#4f6b8c" stroke="#4f6b8c" stroke-width="1.200" stroke-linejoin="round"/><path d="M8.500 2.400c1.900-1.200 4.700-1.400 7.500-.8v10.600c-2.800-.6-5.600-.4-7.500.8z" fill="none" stroke="#4f6b8c" stroke-width="1.400" stroke-linejoin="round"/></svg>
<span class="t" style="left:11.80px;top:1014.68px;font-size:9px;line-height:9px;color:#4a6484;letter-spacing:-0.313px;">User Guide</span>
<svg class="abs" style="left:24px;top:1033.6px;" width="18" height="17" viewBox="0.600 0.400 15.800 14"><path d="M7.200 1h2.600l.4 2.100 1.300.7 2-.8 1.300 2.200-1.600 1.400v1.600l1.600 1.400-1.300 2.200-2-.8-1.300.7-.4 2.100H7.200l-.4-2.100-1.300-.7-2 .8-1.300-2.200 1.600-1.400V6.600L2.200 5.200 3.500 3l2 .8 1.300-.7z" fill="none" stroke="#4f6b8c" stroke-width="1.5" stroke-linejoin="round" stroke-linecap="round"/><circle cx="8.500" cy="7.400" r="2.300" fill="none" stroke="#4f6b8c" stroke-width="1.5" stroke-linejoin="round" stroke-linecap="round"/></svg>
<span class="t" style="left:7.65px;top:1055.68px;font-size:9px;line-height:9px;color:#4a6484;letter-spacing:-0.185px;-webkit-text-stroke:0.3px #4a6484;">Management</span>
</div>
<div id="header">
<div class="abs" style="left:116px;top:25px;width:15px;height:13px;background:#41b496;border-radius:6.500px"></div>
<span class="t" style="left:19.80px;top:18.11px;font-size:23.5px;line-height:23.5px;color:#2f3e52;transform-origin:0 0;transform:scaleX(1.2797);-webkit-text-stroke:0.45px #2f3e52;">fenergo</span>
<span class="t" style="left:158.40px;top:25.54px;font-size:10px;line-height:10px;color:#4a6484;letter-spacing:-0.020px;">Home / Configuration Release Hub / Configuration Bundles / </span>
<span class="t" style="left:428.50px;top:25.54px;font-size:10px;line-height:10px;color:#3b5478;font-weight:700;letter-spacing:-0.259px;">Phase 1</span>
<div class="abs" style="left:1548px;top:18px;width:193px;height:27px;background:#f7f9fb;border-radius:4px"></div>
<svg class="abs" style="left:1560.3px;top:23.6px;" width="15" height="15" viewBox="0 0 16 16"><circle cx="7" cy="7" r="4.800" fill="none" stroke="#4f6b8c" stroke-width="2.800"/><path d="M10.8 10.8L14 14" stroke="#4f6b8c" stroke-width="2.6" stroke-linecap="round"/></svg>
<svg class="abs" style="left:1759px;top:24px;" width="18" height="16" viewBox="0 0 18 16"><path d="M3 1.950H6.600L8.400 3.700H14.800Q16.250 3.700 16.250 5.200V12.500Q16.250 13.950 14.800 13.950H3Q1.550 13.950 1.550 12.500V3.400Q1.550 1.950 3 1.950z" fill="#eef2f7" stroke="#4f6b8c" stroke-width="1.500" stroke-linejoin="round"/><path d="M11.500 6.300v4.800M9.100 8.700h4.800" stroke="#4f6b8c" stroke-width="1.500" stroke-linecap="round"/></svg>
<svg class="abs" style="left:1792px;top:24px;" width="18" height="16" viewBox="0 0 18 16"><path d="M5.200 1.900H8.200L9.800 3.500H15Q16.300 3.500 16.300 4.800V9.800Q16.300 11.100 15 11.100H5.200Q3.900 11.100 3.900 9.800V3.200Q3.900 1.900 5.200 1.900z" fill="#eef2f7" stroke="#4f6b8c" stroke-width="1.400" stroke-linejoin="round"/><path d="M1.950 4.300V12.400Q1.950 13.700 3.250 13.700H14.700" fill="none" stroke="#4f6b8c" stroke-width="1.400" stroke-linecap="round"/><path d="M12.200 5.100L14.500 7.700H13V9.900H11.400V7.700H9.900z" fill="#4f6b8c"/></svg>
<svg class="abs" style="left:1822px;top:22px;" width="18" height="20" viewBox="0 0 18 20"><path d="M9 .8V2.400" stroke="#4f6b8c" stroke-width="1.500" stroke-linecap="round"/><path d="M4.200 16V8.900A4.800 4.800 0 0 1 13.800 8.900V16" fill="#f0f5fa" stroke="#4f6b8c" stroke-width="1.600"/><path d="M1.900 16H16.100" stroke="#4f6b8c" stroke-width="1.600" stroke-linecap="round"/><path d="M9 7.100V10" stroke="#4f6b8c" stroke-width="1.600"/><path d="M8.200 12.500H9.800" stroke="#4f6b8c" stroke-width="1.400"/><path d="M8 18.500H10" stroke="#4f6b8c" stroke-width="1.300" stroke-linecap="round"/></svg>
<div class="abs" style="left:1831px;top:13.6px;width:20.5px;height:17.4px;background:#f0696b;border-radius:8.700px"></div>
<span class="t" style="left:1835.70px;top:17.54px;font-size:10px;line-height:10px;color:#fff;font-weight:700;letter-spacing:-0.103px;">9+</span>
<svg class="abs" style="left:1851px;top:21px;" width="22" height="22" viewBox="0 0 22 22"><defs><linearGradient id="spk" x1="0" y1="0" x2="1" y2="1"><stop offset=".2" stop-color="#25c8e8"/><stop offset=".5" stop-color="#2f9fe4"/><stop offset=".72" stop-color="#7a4fd0"/></linearGradient></defs><path d="M3.700 4.100H18.400V19.600L14.800 16.400H3.700Q2.200 16.400 2.200 14.900V5.600Q2.200 4.100 3.700 4.100z" fill="#e9eef4" stroke="#4f6b8c" stroke-width="1.700" stroke-linejoin="round"/><path d="M14.500 .3C15.400 5 17 6.600 21.700 7.500 17 8.400 15.400 10 14.500 14.700 13.600 10 12 8.400 7.300 7.500 12 6.600 13.600 5 14.500 .3z" fill="#fff" stroke="#fff" stroke-width="1.800" stroke-linejoin="round"/><path d="M14.500 1.900C15.100 5.600 16.400 6.900 20.100 7.500 16.400 8.100 15.100 9.400 14.500 13.100 13.900 9.400 12.600 8.100 8.900 7.500 12.600 6.900 13.900 5.600 14.500 1.900z" fill="url(#spk)"/></svg>
</div>
<div id="scroll"><svg class="abs" style="left:0;top:0" width="19" height="1075" viewBox="0 0 19 1075"><path d="M5.600 14.200H13.400L9.500 8.600z" fill="#9f9f9f" stroke="#9f9f9f" stroke-width="1" stroke-linejoin="round"/><path d="M5.600 1065.800H13.400L9.500 1071.400z" fill="#9f9f9f" stroke="#9f9f9f" stroke-width="1" stroke-linejoin="round"/></svg><div class="thumb"></div></div>
<div id="topbar"></div>
</body>
</html>
